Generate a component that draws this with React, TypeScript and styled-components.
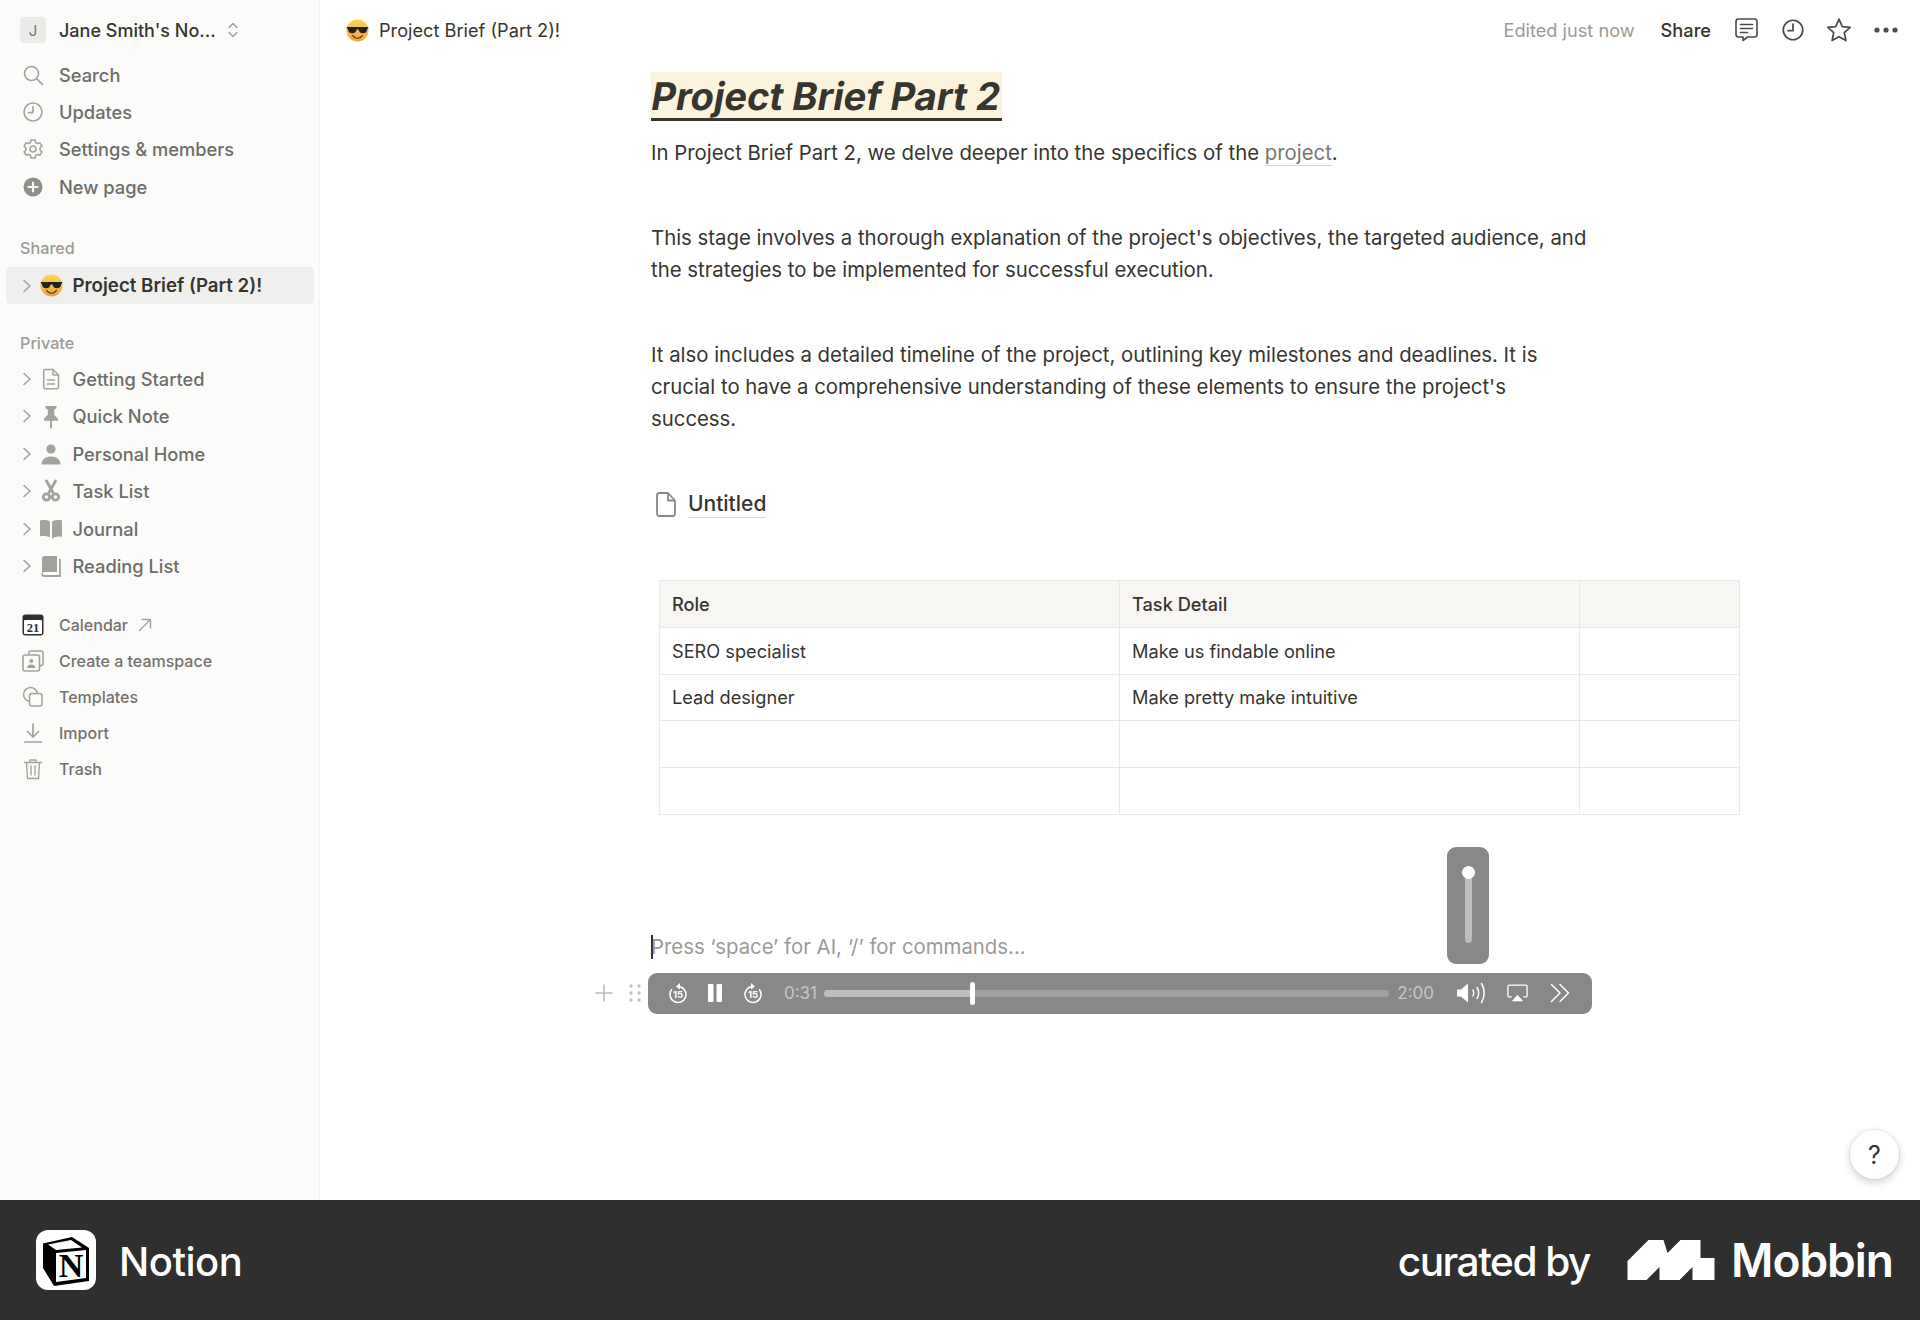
import React from 'react';
import styled, { createGlobalStyle } from 'styled-components';

const GlobalStyle = createGlobalStyle`
    html, body {
        margin: 0;
        padding: 0;
        background: #fff;
        font-family: Inter, "Liberation Sans", sans-serif;
        color: #37352f;
    }
    * { box-sizing: border-box; }
`;

const Page = styled.div`
    width: 1920px;
    height: 1320px;
    display: flex;
    flex-direction: column;
    overflow: hidden;
`;

const Workspace = styled.div`
    flex: 1;
    display: flex;
    min-height: 0;
    position: relative;
`;

/* sidebar */

const Sidebar = styled.aside`
    width: 320px;
    flex-shrink: 0;
    background: #fbfbfa;
    border-right: 1px solid #f3f3f1;
    display: flex;
    flex-direction: column;
`;

const SwitcherRow = styled.div`
    height: 56px;
    padding: 4px 0 0 20px;
    display: flex;
    align-items: center;
    font-size: 18px;
    font-weight: 500;
    color: #37352f;
`;

const Avatar = styled.div`
    width: 26px;
    height: 26px;
    margin-right: 13px;
    border-radius: 4px;
    background: #ebebea;
    color: #75736f;
    font-size: 15px;
    font-weight: 400;
    display: flex;
    align-items: center;
    justify-content: center;
`;

const SwitcherCaret = styled.span`
    width: 12px;
    margin-left: 11px;
    display: flex;
    align-items: center;
`;

const NavRow = styled.div`
    height: 37.4px;
    padding-left: 21px;
    display: flex;
    align-items: center;
    gap: 14px;
    font-size: 18.3px;
    font-weight: 500;
    color: #6e6d69;
`;

const IconSlot = styled.span`
    width: 24px;
    flex-shrink: 0;
    display: flex;
    align-items: center;
    justify-content: center;
`;

const SectionLabel = styled.div<{ $top: number }>`
    height: 24px;
    margin-top: ${p => p.$top}px;
    padding-left: 20px;
    display: flex;
    align-items: center;
    font-size: 16.2px;
    font-weight: 500;
    color: #9c9b98;
`;

const TreeRow = styled.div<{ $active?: boolean }>`
    height: ${p => (p.$active ? 37 : 37.35)}px;
    margin: 0 5px 0 6px;
    padding-left: 16px;
    display: flex;
    align-items: center;
    font-size: ${p => (p.$active ? 18.7 : 18.3)}px;
    font-weight: ${p => (p.$active ? 600 : 500)};
    color: ${p => (p.$active ? '#37352f' : '#6e6d69')};
    background: ${p => (p.$active ? '#efefed' : 'transparent')};
    border-radius: 4px;
`;

const TreeList = styled.div`
    margin-top: 5.3px;
`;

const ActiveWrap = styled.div`
    margin-top: 7px;
`;

const Caret = styled.span`
    width: 15px;
    flex-shrink: 0;
    display: flex;
    align-items: center;
`;

const TreeIcon = styled.span`
    width: 24px;
    margin: 0 9.5px 0 2px;
    flex-shrink: 0;
    display: flex;
    align-items: center;
    justify-content: center;
`;

const UtilityList = styled.div`
    margin-top: 22.5px;
`;

const UtilityRow = styled.div`
    height: 36px;
    padding-left: 21px;
    display: flex;
    align-items: center;
    gap: 14px;
    font-size: 16px;
    font-weight: 500;
    color: #73726e;
`;

const ExternalMark = styled.span`
    margin-left: -4px;
    display: flex;
    align-items: center;
`;

/* main */

const Main = styled.main`
    flex: 1;
    min-width: 0;
    display: flex;
    flex-direction: column;
`;

const Topbar = styled.header`
    height: 60px;
    flex-shrink: 0;
    display: flex;
    align-items: center;
    padding: 0 11px 0 26px;
    font-size: 18.2px;
`;

const Crumb = styled.div`
    display: flex;
    align-items: center;
    gap: 10px;
    font-weight: 400;
    color: #37352f;
`;

const TopActions = styled.div`
    margin: -1px 0 0 auto;
    display: flex;
    align-items: center;
`;

const EditedText = styled.span`
    color: #9b9a97;
    margin-right: 26px;
`;

const ShareText = styled.span`
    font-weight: 450;
    color: #37352f;
    margin-right: 12px;
`;

const TopIcon = styled.span`
    width: 46.5px;
    display: flex;
    align-items: center;
    justify-content: center;
`;

const Doc = styled.div`
    padding-left: 331px;
    width: 1600px;
`;

const TitleBlock = styled.div`
    margin-top: 12px;
    height: 49px;
    display: flex;
`;

const Title = styled.h1`
    margin: 0;
    padding: 0 1px;
    height: 49px;
    line-height: 48px;
    font-size: 38.1px;
    font-weight: 700;
    color: #37352f;
    background: #fbf3db;
    border-bottom: 3px solid #37352f;
`;

const TitleSlant = styled.span`
    display: inline-block;
    transform: skewX(-10deg);
`;

const Para = styled.p<{ $top: number }>`
    margin: ${p => p.$top}px 0 0;
    width: 940px;
    font-size: 20.35px;
    line-height: 32px;
    color: #37352f;
`;

const InlineLink = styled.span`
    color: #787774;
    border-bottom: 1px solid #d5d4d1;
`;

const SubPage = styled.div`
    margin-top: 53px;
    height: 32px;
    display: flex;
    align-items: center;
    padding-left: 5px;
    gap: 12px;
`;

const SubPageName = styled.span`
    font-size: 21px;
    font-weight: 500;
    line-height: 26px;
    color: #37352f;
    border-bottom: 1px solid #dcdbd8;
`;

const Table = styled.table`
    margin: 60px 0 0 8px;
    border-collapse: collapse;
    table-layout: fixed;
    width: 1081px;
    font-size: 18.2px;
    color: #37352f;
`;

const Cell = styled.td<{ $w?: number }>`
    height: 46.8px;
    padding: 0 12px;
    border: 1px solid #e9e9e7;
    ${p => (p.$w ? `width: ${p.$w}px;` : '')}
`;

const HeadCell = styled(Cell).attrs({ as: 'th' })`
    background: #f7f6f3;
    font-weight: 500;
    text-align: left;
`;

const Placeholder = styled.div`
    position: relative;
    margin-top: 116px;
    height: 32px;
    line-height: 32px;
    font-size: 20.35px;
    color: #9b9a97;
    &::before {
        content: '';
        position: absolute;
        left: 0;
        top: 4px;
        width: 1.5px;
        height: 24px;
        background: #37352f;
    }
`;

const Player = styled.div`
    position: relative;
    margin: 10px 0 0 -3px;
    width: 944px;
    height: 41px;
    border-radius: 9px;
    background: #888888;
    display: flex;
    align-items: center;
    padding: 0 22px 0 19px;
    font-size: 17px;
    color: #c6c6c6;
`;

const BlockHandles = styled.div`
    position: absolute;
    left: -53px;
    top: 0;
    height: 41px;
    display: flex;
    align-items: center;
    gap: 16px;
`;

const PlayerIcon = styled.span<{ $w: number; $ml?: number; $mr?: number }>`
    width: ${p => p.$w}px;
    margin-left: ${p => p.$ml ?? 0}px;
    margin-right: ${p => p.$mr ?? 0}px;
    flex-shrink: 0;
    display: flex;
    align-items: center;
    justify-content: center;
`;

const Track = styled.div`
    position: relative;
    flex: 1;
    height: 7px;
    margin: 0 8px 0 7px;
    border-radius: 4px;
    background: #a0a0a0;
`;

const TrackFill = styled.div`
    height: 100%;
    border-radius: 4px;
    background: #bdbdbd;
`;

const TrackKnob = styled.div`
    position: absolute;
    top: -8px;
    width: 5px;
    height: 23px;
    margin-left: -2px;
    border-radius: 3px;
    background: #fff;
`;

const VolumePopup = styled.div`
    position: absolute;
    right: 103px;
    bottom: calc(100% + 9px);
    width: 42px;
    height: 117px;
    border-radius: 9px;
    background: #888888;
    display: flex;
    justify-content: center;
    padding-top: 25px;
`;

const VolumeTrack = styled.div`
    position: relative;
    width: 7px;
    height: 71px;
    border-radius: 4px;
    background: #bdbdbd;
`;

const VolumeKnob = styled.div`
    position: absolute;
    left: -3px;
    top: -6px;
    width: 13px;
    height: 13px;
    border-radius: 50%;
    background: #fff;
`;

const HelpButton = styled.div`
    position: absolute;
    right: 21px;
    bottom: 21px;
    width: 49px;
    height: 49px;
    border-radius: 50%;
    background: #fff;
    box-shadow: 0 0 0 1px rgba(15, 15, 15, 0.05), 0 3px 8px rgba(15, 15, 15, 0.2);
    display: flex;
    align-items: center;
    justify-content: center;
    font-size: 25px;
    font-weight: 400;
    color: #37352f;
`;

/* footer */

const Footer = styled.footer`
    height: 120px;
    flex-shrink: 0;
    background: #2f2f2f;
    display: flex;
    align-items: center;
    padding: 0 27px 0 36px;
    color: #fff;
`;

const BrandName = styled.span`
    margin-left: 23px;
    padding-top: 2px;
    font-size: 40px;
    font-weight: 500;
    letter-spacing: -0.5px;
`;

const Curated = styled.span`
    margin-left: auto;
    padding-top: 2px;
    font-size: 40.6px;
    font-weight: 500;
    letter-spacing: -1.5px;
`;

const MobbinName = styled.span`
    margin-left: 16px;
    font-size: 46px;
    font-weight: 600;
    letter-spacing: -1px;
`;

const MobbinLogo = styled.svg`
    margin-left: 37px;
`;

/* icons */

const Stroke = ({ size = 24, color = '#a3a29e', w = 1.6, children }: { size?: number; color?: string; w?: number; children: React.ReactNode }) => (
    <svg width={size} height={size} viewBox="0 0 24 24" fill="none" stroke={color} strokeWidth={w} strokeLinecap="round" strokeLinejoin="round">
        {children}
    </svg>
);

const Fill = ({ size = 24, color = '#a3a29e', children }: { size?: number; color?: string; children: React.ReactNode }) => (
    <svg width={size} height={size} viewBox="0 0 24 24" fill={color}>
        {children}
    </svg>
);

const SearchIcon = () => <Stroke><circle cx="10.5" cy="10.5" r="7" /><path d="M15.6 15.6l6 6" /></Stroke>;
const ClockIcon = ({ color, size }: { color?: string; size?: number }) => (
    <Stroke color={color} size={size}><circle cx="12" cy="12" r="9" /><path d="M12 6.5V12.6H7.5" /></Stroke>
);
const GearIcon = () => (
    <Stroke>
        <path d="M10 3h4l.6 2.6 1.8 1 2.5-.8 2 3.4-1.9 1.8v2l1.9 1.8-2 3.4-2.5-.8-1.8 1L14 21h-4l-.6-2.6-1.8-1-2.5.8-2-3.4L5 13v-2L3.1 9.2l2-3.4 2.5.8 1.8-1z" />
        <circle cx="12" cy="12" r="3" />
    </Stroke>
);
const PlusCircleIcon = () => (
    <svg width="24" height="24" viewBox="0 0 24 24">
        <circle cx="12" cy="12" r="9.5" fill="#8f8e8b" />
        <path d="M12 7.5v9M7.5 12h9" stroke="#fbfbfa" strokeWidth="2.2" strokeLinecap="round" />
    </svg>
);
const UpDownIcon = () => (
    <svg width="12" height="18" viewBox="0 0 12 18" fill="none" stroke="#a3a29e" strokeWidth="1.5" strokeLinecap="round" strokeLinejoin="round">
        <path d="M2 6.5L6 2.5l4 4M2 11.5l4 4 4-4" />
    </svg>
);
const CaretIcon = () => (
    <svg width="10" height="14" viewBox="0 0 10 14" fill="none" stroke="#a3a29e" strokeWidth="1.6" strokeLinecap="round" strokeLinejoin="round">
        <path d="M2 1.5L8 7l-6 5.5" />
    </svg>
);
const SunglassesFace = () => (
    <svg width="23" height="23" viewBox="0 0 24 24">
        <defs>
            <linearGradient id="faceFill" x1="0" y1="0" x2="0" y2="1">
                <stop offset="0" stopColor="#fcd55a" />
                <stop offset="1" stopColor="#f2a13a" />
            </linearGradient>
        </defs>
        <circle cx="12" cy="12" r="11.5" fill="url(#faceFill)" />
        <path d="M.8 8.3h22.4v1.6l-1 .3c-.2 3.2-2 4.7-4.6 4.7-2.8 0-4-1.7-4.6-3.9h-1.9c-.6 2.2-1.8 3.9-4.6 3.9-2.6 0-4.4-1.5-4.6-4.7l-1-.3z" fill="#222" />
        <path d="M7 17.3c1.4 2 3 2.9 5 2.9s3.6-.9 5-2.9" fill="none" stroke="#6b3f16" strokeWidth="1.5" strokeLinecap="round" />
    </svg>
);
const DocLinesIcon = () => (
    <Stroke size={26} w={1.5}>
        <path d="M6.5 2.5h7.5l5.5 5.5v12a1.8 1.8 0 0 1-1.8 1.8H6.5A1.8 1.8 0 0 1 4.7 20V4.3a1.8 1.8 0 0 1 1.8-1.8z" />
        <path d="M14 2.5v5.5h5.5M8.5 13h7M8.5 17h7" />
    </Stroke>
);
const PinIcon = () => (
    <Fill size={26}>
        <path d="M6.5 2h11v2.6l-2.3.9v5.2l3.8 4v2H13v6.8l-1 1.5-1-1.5v-6.8H5v-2l3.8-4V5.5L6.5 4.6z" />
    </Fill>
);
const PersonIcon = () => (
    <Fill size={26}>
        <circle cx="12" cy="7" r="4.6" />
        <path d="M2.5 22.5c0-5 3.8-8 9.5-8s9.5 3 9.5 8z" />
    </Fill>
);
const ScissorsIcon = () => (
    <Stroke size={24} w={2.8}>
        <path d="M7.5 2l6.500 11.500M16.500 2L10 13.500" />
        <circle cx="7.500" cy="18" r="3.200" />
        <circle cx="16.500" cy="18" r="3.200" />
    </Stroke>
);
const BookOpenIcon = () => (
    <Fill size={26}>
        <path d="M1 3.500c3.500-.8 7-.4 10 1v16c-3-1.400-6.500-1.800-10-1.200zM23 3.500c-3.500-.8-7-.4-10 1v17.500c.4-.6 1-1.100 2-1.500 2.600-1 5.300-1.200 8-.7z" />
    </Fill>
);
const BookIcon = () => (
    <svg width="26" height="26" viewBox="0 0 24 24" fill="none">
        <path d="M3 4.500A2.500 2.500 0 0 1 5.500 2H18v16H5.500A2.500 2.500 0 0 0 3 19.500z" fill="#a3a29e" />
        <path d="M21 5v17H5.500A2.500 2.500 0 0 1 3 19.500" stroke="#a3a29e" strokeWidth="1.8" />
    </svg>
);
const CalendarIcon = () => (
    <svg width="22" height="22" viewBox="0 0 22 22">
        <rect x="0.5" y="0.5" width="21" height="21" rx="3" fill="#2f2f2f" />
        <rect x="2" y="6" width="18" height="14" rx="1" fill="#fff" />
        <text x="11" y="18" textAnchor="middle" fontSize="12.500" fontWeight="700" fontFamily="Liberation Serif, serif" fill="#2f2f2f">21</text>
    </svg>
);
const ArrowOutIcon = () => (
    <svg width="14" height="14" viewBox="0 0 14 14" fill="none" stroke="#a3a29e" strokeWidth="1.400" strokeLinecap="round" strokeLinejoin="round">
        <path d="M1.500 12.500L12.500 1.500M4 1.500h8.500V10" />
    </svg>
);
const TeamspaceIcon = () => (
    <svg width="24" height="24" viewBox="0 0 24 24" fill="none" stroke="#a3a29e" strokeWidth="1.600" strokeLinejoin="round">
        <path d="M8 5V3.500A1.500 1.500 0 0 1 9.500 2h11A1.500 1.500 0 0 1 22 3.500V15a1.500 1.500 0 0 1-1.500 1.500H19" />
        <rect x="2" y="6" width="16.500" height="16" rx="2" />
        <circle cx="10.300" cy="12" r="2" fill="#a3a29e" stroke="none" />
        <path d="M6 19c.3-2.500 2-3.600 4.300-3.600s4 1.100 4.300 3.600z" fill="#a3a29e" stroke="none" />
    </svg>
);
const TemplatesIcon = () => (
    <Stroke w={1.500}>
        <path d="M8.500 16.500a7 7 0 1 1 8-8" />
        <rect x="8.500" y="8.500" width="12.500" height="12.500" rx="2.500" />
    </Stroke>
);
const ImportIcon = () => (
    <Stroke w={1.700}>
        <path d="M12 3v13M6.500 10.500L12 16l5.500-5.500M3.500 21h17" />
    </Stroke>
);
const TrashIcon = () => (
    <Stroke w={1.400}>
        <path d="M3.500 5.500h17M9 5.500V3h6v2.500M5.500 5.500l1 16h11l1-16M10 9v9M14 9v9" />
    </Stroke>
);
const CommentIcon = () => (
    <svg width="25" height="25" viewBox="0 0 25 25" fill="none" stroke="#4d4c48" strokeWidth="1.600" strokeLinecap="round" strokeLinejoin="round">
        <path d="M4.500 2h16A2.500 2.500 0 0 1 23 4.500v13a2.500 2.500 0 0 1-2.500 2.500h-7l-4.500 3.500V20H4.500A2.500 2.500 0 0 1 2 17.500v-13A2.500 2.500 0 0 1 4.500 2z" />
        <path d="M6.500 7.500h12M6.500 11.500h12M6.500 15.500h7" />
    </svg>
);
const StarIcon = () => (
    <svg width="26" height="26" viewBox="0 0 24 24" fill="none" stroke="#4d4c48" strokeWidth="1.600" strokeLinejoin="round">
        <path d="M12 2l3 6.800 7.300.8-5.400 4.900 1.500 7.300L12 18.200l-6.400 3.600 1.500-7.300L1.700 9.600 9 8.800z" />
    </svg>
);
const DotsIcon = () => (
    <svg width="24" height="6" viewBox="0 0 24 6" fill="#4d4c48">
        <circle cx="3" cy="3" r="2.600" />
        <circle cx="12" cy="3" r="2.600" />
        <circle cx="21" cy="3" r="2.600" />
    </svg>
);
const FileIcon = () => (
    <svg width="20" height="25" viewBox="0 0 20 25" fill="none" stroke="#8a8986" strokeWidth="1.800" strokeLinejoin="round">
        <path d="M3 1h9l7 7.500V21.500A2.500 2.500 0 0 1 16.500 24h-13A2.500 2.500 0 0 1 1 21.500v-18A2.500 2.500 0 0 1 3 1z" />
        <path d="M12 1v7.500h7" />
    </svg>
);
const SkipIcon = ({ forward }: { forward?: boolean }) => (
    <svg width="20" height="22" viewBox="0 0 20 22" fill="none" stroke="#fff" strokeWidth="1.500" strokeLinecap="round">
        <g transform={forward ? 'translate(20 0) scale(-1 1)' : undefined}>
            <path d="M10 4.500a8 8 0 1 1-6.500 3.300" />
            <path d="M12 1L8 4.500 12 7.500z" fill="#fff" stroke="none" />
        </g>
        <text x="10" y="16" textAnchor="middle" fontSize="9.500" fontWeight="700" fontFamily="Inter, sans-serif" fill="#fff" stroke="none">15</text>
    </svg>
);
const PauseIcon = () => (
    <svg width="14" height="18" viewBox="0 0 14 18" fill="#fff">
        <rect x="0" y="0" width="5.500" height="18" rx="1" />
        <rect x="8.500" y="0" width="5.500" height="18" rx="1" />
    </svg>
);
const SpeakerIcon = () => (
    <svg width="30" height="22" viewBox="0 0 30 22" fill="none" stroke="#fff" strokeWidth="1.500" strokeLinecap="round">
        <path d="M1 7.500h4L12 1.500v19L5 14.500H1z" fill="#fff" stroke="none" />
        <path d="M17 8c1 1.800 1 4.200 0 6M21 5.500c2 3.300 2 7.700 0 11M25.500 1.500c3.500 5.500 3.500 13.500 0 19" />
    </svg>
);
const AirplayIcon = () => (
    <svg width="21" height="18" viewBox="0 0 24 20" fill="none" stroke="#fff" strokeWidth="1.500">
        <path d="M5.500 14.500H2.500A1.500 1.500 0 0 1 1 13V2.500A1.500 1.500 0 0 1 2.500 1h19A1.500 1.500 0 0 1 23 2.500V13a1.500 1.500 0 0 1-1.500 1.500h-3" />
        <path d="M12 12l6.500 7.500h-13z" fill="#fff" stroke="none" />
    </svg>
);
const DoubleChevron = () => (
    <svg width="20" height="20" viewBox="0 0 20 20" fill="none" stroke="#fff" strokeWidth="1.500" strokeLinecap="round" strokeLinejoin="round">
        <path d="M1.500 1.500L10 10l-8.500 8.500M10 1.500L18.500 10 10 18.500" />
    </svg>
);
const PlusHandle = () => (
    <svg width="18" height="18" viewBox="0 0 18 18" stroke="#bdbcb9" strokeWidth="1.600" strokeLinecap="round">
        <path d="M9 1v16M1 9h16" />
    </svg>
);
const DragHandle = () => (
    <svg width="12" height="18" viewBox="0 0 12 18" fill="#c4c3c0">
        {[2, 9, 16].flatMap(y => [2, 10].map(x => <circle key={`${x}-${y}`} cx={x} cy={y} r="1.700" />))}
    </svg>
);
const NotionLogo = () => (
    <svg width="60" height="60" viewBox="0 0 60 60">
        <rect width="60" height="60" rx="12" fill="#fff" />
        <path d="M7 13.500L36 7l17 11v33l-35 5-11-18z" fill="#000" />
        <path d="M12 14.500l23-4.500 11 7.500-26 2.500z" fill="#fff" />
        <path d="M20 23l30-3v28l-30 4z" fill="#fff" />
        <text x="35" y="47" textAnchor="middle" fontSize="34" fontWeight="700" fontFamily="Liberation Serif, serif" fill="#000">N</text>
    </svg>
);

const navItems = [
    { label: 'Search', icon: <SearchIcon /> },
    { label: 'Updates', icon: <ClockIcon /> },
    { label: 'Settings & members', icon: <GearIcon /> },
    { label: 'New page', icon: <PlusCircleIcon /> },
];

const privatePages = [
    { label: 'Getting Started', icon: <DocLinesIcon /> },
    { label: 'Quick Note', icon: <PinIcon /> },
    { label: 'Personal Home', icon: <PersonIcon /> },
    { label: 'Task List', icon: <ScissorsIcon /> },
    { label: 'Journal', icon: <BookOpenIcon /> },
    { label: 'Reading List', icon: <BookIcon /> },
];

const utilities = [
    { label: 'Create a teamspace', icon: <TeamspaceIcon /> },
    { label: 'Templates', icon: <TemplatesIcon /> },
    { label: 'Import', icon: <ImportIcon /> },
    { label: 'Trash', icon: <TrashIcon /> },
];

const rows = [
    ['SERO specialist', 'Make us findable online', ''],
    ['Lead designer', 'Make pretty make intuitive', ''],
    ['', '', ''],
    ['', '', ''],
];

const playedShare = 148 / 567;

const App = () => (
    <Page>
        <GlobalStyle />
        <Workspace>
            <Sidebar>
                <SwitcherRow>
                    <Avatar>J</Avatar>
                    Jane Smith's No...
                    <SwitcherCaret><UpDownIcon /></SwitcherCaret>
                </SwitcherRow>
                {navItems.map(item => (
                    <NavRow key={item.label}>
                        <IconSlot>{item.icon}</IconSlot>
                        {item.label}
                    </NavRow>
                ))}

                <SectionLabel $top={30.6}>Shared</SectionLabel>
                <ActiveWrap>
                    <TreeRow $active>
                        <Caret><CaretIcon /></Caret>
                        <TreeIcon><SunglassesFace /></TreeIcon>
                        Project Brief (Part 2)!
                    </TreeRow>
                </ActiveWrap>

                <SectionLabel $top={27}>Private</SectionLabel>
                <TreeList>
                    {privatePages.map(page => (
                        <TreeRow key={page.label}>
                            <Caret><CaretIcon /></Caret>
                            <TreeIcon>{page.icon}</TreeIcon>
                            {page.label}
                        </TreeRow>
                    ))}
                </TreeList>

                <UtilityList>
                    <UtilityRow>
                        <IconSlot><CalendarIcon /></IconSlot>
                        Calendar
                        <ExternalMark><ArrowOutIcon /></ExternalMark>
                    </UtilityRow>
                    {utilities.map(item => (
                        <UtilityRow key={item.label}>
                            <IconSlot>{item.icon}</IconSlot>
                            {item.label}
                        </UtilityRow>
                    ))}
                </UtilityList>
            </Sidebar>

            <Main>
                <Topbar>
                    <Crumb>
                        <SunglassesFace />
                        Project Brief (Part 2)!
                    </Crumb>
                    <TopActions>
                        <EditedText>Edited just now</EditedText>
                        <ShareText>Share</ShareText>
                        <TopIcon><CommentIcon /></TopIcon>
                        <TopIcon><ClockIcon color="#4d4c48" size={26} /></TopIcon>
                        <TopIcon><StarIcon /></TopIcon>
                        <TopIcon><DotsIcon /></TopIcon>
                    </TopActions>
                </Topbar>

                <Doc>
                    <TitleBlock>
                        <Title><TitleSlant>Project Brief Part 2</TitleSlant></Title>
                    </TitleBlock>
                    <Para $top={16}>
                        In Project Brief Part 2, we delve deeper into the specifics of the <InlineLink>project</InlineLink>.
                    </Para>
                    <Para $top={53}>
                        This stage involves a thorough explanation of the project's objectives, the targeted audience, and the strategies to be implemented for successful execution.
                    </Para>
                    <Para $top={53}>
                        It also includes a detailed timeline of the project, outlining key milestones and deadlines. It is crucial to have a comprehensive understanding of these elements to ensure the project's success.
                    </Para>
                    <SubPage>
                        <FileIcon />
                        <SubPageName>Untitled</SubPageName>
                    </SubPage>
                    <Table>
                        <thead>
                            <tr>
                                <HeadCell $w={460}>Role</HeadCell>
                                <HeadCell $w={460}>Task Detail</HeadCell>
                                <HeadCell />
                            </tr>
                        </thead>
                        <tbody>
                            {rows.map((row, i) => (
                                <tr key={i}>
                                    {row.map((cell, j) => <Cell key={j}>{cell}</Cell>)}
                                </tr>
                            ))}
                        </tbody>
                    </Table>
                    <Placeholder>Press ‘space’ for AI, ‘/’ for commands...</Placeholder>
                    <Player>
                        <BlockHandles>
                            <PlusHandle />
                            <DragHandle />
                        </BlockHandles>
                        <VolumePopup>
                            <VolumeTrack><VolumeKnob /></VolumeTrack>
                        </VolumePopup>
                        <PlayerIcon $w={22} $mr={19}><SkipIcon /></PlayerIcon>
                        <PlayerIcon $w={14} $mr={20}><PauseIcon /></PlayerIcon>
                        <PlayerIcon $w={22} $mr={20}><SkipIcon forward /></PlayerIcon>
                        <span>0:31</span>
                        <Track>
                            <TrackFill style={{ width: `${playedShare * 100}%` }} />
                            <TrackKnob style={{ left: `${playedShare * 100}%` }} />
                        </Track>
                        <span>2:00</span>
                        <PlayerIcon $w={30} $ml={22} $mr={19}><SpeakerIcon /></PlayerIcon>
                        <PlayerIcon $w={24} $mr={21}><AirplayIcon /></PlayerIcon>
                        <PlayerIcon $w={20}><DoubleChevron /></PlayerIcon>
                    </Player>
                </Doc>
            </Main>
            <HelpButton>?</HelpButton>
        </Workspace>

        <Footer>
            <NotionLogo />
            <BrandName>Notion</BrandName>
            <Curated>curated by</Curated>
            <MobbinLogo width="88" height="40" viewBox="0 0 87 40" fill="#fff">
                <polygon points="0,40 0,21 21,0 36,0 40,13 53,0 73,0 73,18 87,18 87,40 65,40 65,27 52,40 32,40 32,27 19,40" />
            </MobbinLogo>
            <MobbinName>Mobbin</MobbinName>
        </Footer>
    </Page>
);

export default App;
